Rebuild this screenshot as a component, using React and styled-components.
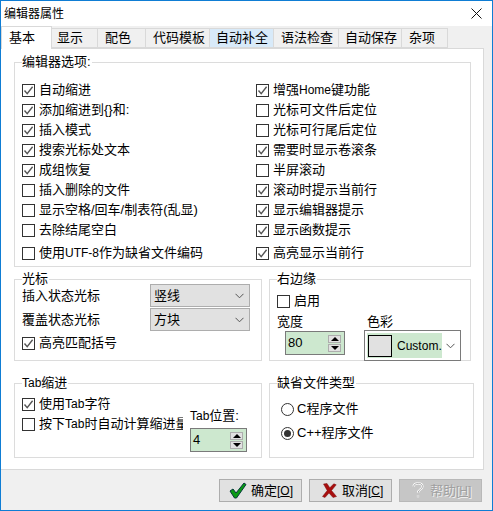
import React from "react";
import styled, { createGlobalStyle } from "styled-components";

const GlobalStyle = createGlobalStyle`
  html, body {
    margin: 0;
    padding: 0;
    background: #fff;
  }
  * {
    box-sizing: border-box;
  }
`;

const Window = styled.div`
  width: 493px;
  height: 511px;
  display: flex;
  flex-direction: column;
  border: 1px solid #0f7dd4;
  background-color: #f0f0f0;
  color: #000;
  font-family: "Liberation Sans", "Noto Sans CJK SC", sans-serif;
  font-size: 13px;
  line-height: 18px;
  overflow: hidden;
`;

const TitleBar = styled.div`
  height: 25px;
  flex: none;
  display: flex;
  align-items: center;
  justify-content: space-between;
  padding: 0 10px 0 3px;
  background-color: #fff;
  font-size: 12px;
`;

const CloseIcon = styled.svg`
  width: 11px;
  height: 11px;
`;

const TabStrip = styled.div`
  height: 22px;
  flex: none;
  display: flex;
  align-items: flex-end;
  position: relative;
  z-index: 1;
`;

const Tab = styled.div`
  width: ${(p) => p.$w}px;
  height: ${(p) => (p.$active ? 23 : 20)}px;
  margin-bottom: ${(p) => (p.$active ? -1 : 0)}px;
  padding-left: ${(p) => p.$pad}px;
  display: flex;
  align-items: center;
  border: 1px solid #d9d9d9;
  border-left: ${(p) => (p.$active ? "1px solid #d9d9d9" : "none")};
  border-bottom: ${(p) => (p.$active ? "none" : "1px solid #d9d9d9")};
  background-color: ${(p) => (p.$active ? "#fff" : p.$hover ? "#d8eaf9" : "#f0f0f0")};
`;

const Panel = styled.div`
  height: 422px;
  flex: none;
  margin-right: 8px;
  padding: 13px 0 0 13px;
  display: grid;
  grid-template-columns: 248px 205px;
  grid-template-rows: 205px 82px 85px;
  column-gap: 7px;
  row-gap: 12px;
  align-content: start;
  background-color: #fff;
  border: 1px solid #d9d9d9;
  border-left: none;
`;

const Group = styled.div`
  position: relative;
  min-width: 0;
  grid-column: ${(p) => (p.$wide ? "1 / span 2" : "auto")};
  width: ${(p) => (p.$w ? `${p.$w}px` : "auto")};
  margin-top: ${(p) => p.$top || 0}px;
  padding: ${(p) => p.$pad || "4px 7px 0"};
  border: 1px solid #dcdcdc;
`;

const Legend = styled.div`
  position: absolute;
  top: -10px;
  left: 7px;
  padding-right: 1px;
  background-color: #fff;
`;

const OptionsGrid = styled.div`
  display: grid;
  grid-template-columns: 234px 190px;
  grid-auto-rows: 20px;
`;

const Row = styled.label`
  height: 20px;
  display: flex;
  align-items: center;
  gap: 4px;
  white-space: nowrap;
  overflow: hidden;
  width: ${(p) => (p.$w ? `${p.$w}px` : "auto")};
  margin-top: ${(p) => p.$top || 0}px;
`;

const Box = styled.span`
  width: 13px;
  height: 13px;
  flex: none;
  display: flex;
  border: 1px solid #333;
  background-color: #fff;
`;

const Latin = styled.span`
  font-size: 12px;
`;

const CursorRow = styled.div`
  display: grid;
  grid-template-columns: 128px 100px;
  align-items: center;
  height: 23px;
  margin-bottom: 1px;
`;

const Select = styled.div`
  height: 23px;
  display: flex;
  align-items: center;
  justify-content: space-between;
  padding: 0 5px 0 3px;
  background-color: #e1e1e1;
  border: 1px solid #adadad;
`;

const Chevron = styled.svg`
  width: 9px;
  height: 6px;
  flex: none;
`;

const Fields = styled.div`
  display: flex;
  margin-top: 2px;
`;

const Field = styled.div`
  width: ${(p) => p.$w}px;
`;

const Caption = styled.div`
  height: 18px;
  margin-bottom: ${(p) => p.$gap || 0}px;
`;

const Spin = styled.div`
  width: ${(p) => p.$w}px;
  height: 24px;
  margin-left: ${(p) => p.$left || 0}px;
  padding: 2px 3px 2px 2px;
  display: flex;
  align-items: center;
  justify-content: space-between;
  background-color: #cde8cf;
  border: 1px solid #7a7a7a;
`;

const SpinButtons = styled.div`
  display: flex;
  flex-direction: column;
  gap: 1px;
`;

const SpinButton = styled.div`
  width: 13px;
  height: 8px;
  display: flex;
  align-items: center;
  justify-content: center;
  background-color: #e1e1e1;
  border: 1px solid #adadad;
`;

const Arrow = styled.span`
  width: 0;
  height: 0;
  border-left: 4px solid transparent;
  border-right: 4px solid transparent;
  border-${(p) => (p.$down ? "top" : "bottom")}: 4px solid #000;
`;

const ColorCombo = styled.div`
  width: 97px;
  height: 31px;
  margin-left: -3px;
  margin-top: -1px;
  padding: 2px;
  display: flex;
  align-items: center;
  position: relative;
  background-color: #fff;
  border: 1px solid #7a7a7a;
`;

const ColorValue = styled.div`
  width: 75px;
  height: 100%;
  display: flex;
  align-items: center;
  gap: 5px;
  padding-left: 1px;
  overflow: hidden;
  white-space: nowrap;
  background-color: #cde8cf;
`;

const Swatch = styled.span`
  width: 24px;
  height: 22px;
  flex: none;
  background-color: #e1e1e1;
  border: 1px solid #000;
`;

const ComboArrow = styled.span`
  flex: 1;
  display: flex;
  justify-content: center;
`;

const TabColumns = styled.div`
  display: flex;
  gap: 7px;
`;

const TabSpinColumn = styled.div`
  padding-top: 13px;
`;

const RadioRow = styled.label`
  height: 24px;
  display: flex;
  align-items: center;
  gap: 3px;
`;

const Radio = styled.span`
  width: 13px;
  height: 13px;
  flex: none;
  display: flex;
  align-items: center;
  justify-content: center;
  border: 1px solid #333;
  border-radius: 50%;
  background-color: #fff;

  &::after {
    content: "";
    width: 7px;
    height: 7px;
    border-radius: 50%;
    background-color: ${(p) => (p.$on ? "#333" : "transparent")};
  }
`;

const Footer = styled.div`
  flex: 1;
  display: flex;
  justify-content: flex-end;
  gap: 7px;
  padding: 9px 10px 0 0;
`;

const Button = styled.div`
  width: 83px;
  height: 23px;
  display: flex;
  align-items: center;
  padding-left: ${(p) => p.$pad}px;
  gap: ${(p) => p.$gap}px;
  white-space: nowrap;
  background-color: ${(p) => (p.$disabled ? "#c6c6c6" : "#e1e1e1")};
  border: 1px solid ${(p) => (p.$disabled ? "#b8b8b8" : "#adadad")};
  color: ${(p) => (p.$disabled ? "#a0a0a0" : "#000")};
  text-shadow: ${(p) => (p.$disabled ? "1px 1px 0 #eee" : "none")};
`;

const Hotkey = styled.span`
  font-size: 12px;

  u {
    text-decoration: underline;
  }
`;

const Check = () => (
  <svg width="11" height="11" viewBox="0 0 11 11">
    <path d="M1.5 5.5 L4.2 8.6 L9.6 1.8" fill="none" stroke="#555" strokeWidth="1.4" />
  </svg>
);

const CheckRow = ({ on, children, w, top }) => (
  <Row $w={w} $top={top}>
    <Box>{on && <Check />}</Box>
    <span>{children}</span>
  </Row>
);

const ChevronDown = () => (
  <Chevron viewBox="0 0 9 6">
    <path d="M0.5 0.8 L4.5 4.8 L8.5 0.8" fill="none" stroke="#555" strokeWidth="1" />
  </Chevron>
);

const SpinBox = ({ w, left, value }) => (
  <Spin $w={w} $left={left}>
    <span>{value}</span>
    <SpinButtons>
      <SpinButton>
        <Arrow />
      </SpinButton>
      <SpinButton>
        <Arrow $down />
      </SpinButton>
    </SpinButtons>
  </Spin>
);

const tabs = [
  { label: "基本", w: 51, pad: 7, active: true },
  { label: "显示", w: 46, pad: 5 },
  { label: "配色", w: 48, pad: 7 },
  { label: "代码模板", w: 64, pad: 7 },
  { label: "自动补全", w: 64, pad: 6, hover: true },
  { label: "语法检查", w: 65, pad: 7 },
  { label: "自动保存", w: 63, pad: 6 },
  { label: "杂项", w: 46, pad: 7 },
];

const options = [
  ["自动缩进", true],
  [<>增强<Latin>Home</Latin>键功能</>, true],
  ["添加缩进到{}和:", true],
  ["光标可文件后定位", false],
  ["插入模式", true],
  ["光标可行尾后定位", false],
  ["搜索光标处文本", true],
  ["需要时显示卷滚条", true],
  ["成组恢复", true],
  ["半屏滚动", false],
  ["插入删除的文件", false],
  ["滚动时提示当前行", true],
  ["显示空格/回车/制表符(乱显)", false],
  ["显示编辑器提示", true],
  ["去除结尾空白", false],
  ["显示函数提示", true],
  [<>使用<Latin>UTF-8</Latin>作为缺省文件编码</>, false, 3],
  ["高亮显示当前行", true, 3],
];

const App = () => {
  return (
    <Window>
      <GlobalStyle />
      <TitleBar>
        编辑器属性
        <CloseIcon viewBox="0 0 11 11">
          <path d="M0.5 0.5 L10.5 10.5 M10.5 0.5 L0.5 10.5" stroke="#111" strokeWidth="1" />
        </CloseIcon>
      </TitleBar>
      <TabStrip>
        {tabs.map((t) => (
          <Tab key={t.label} $w={t.w} $pad={t.pad} $active={t.active} $hover={t.hover}>
            {t.label}
          </Tab>
        ))}
      </TabStrip>
      <Panel>
        <Group $wide $w={457} $pad="17px 7px 0">
          <Legend>编辑器选项:</Legend>
          <OptionsGrid>
            {options.map(([label, on, top], i) => (
              <CheckRow key={i} on={on} top={top}>
                {label}
              </CheckRow>
            ))}
          </OptionsGrid>
        </Group>

        <Group>
          <Legend>光标</Legend>
          <CursorRow>
            插入状态光标
            <Select>
              竖线
              <ChevronDown />
            </Select>
          </CursorRow>
          <CursorRow>
            覆盖状态光标
            <Select>
              方块
              <ChevronDown />
            </Select>
          </CursorRow>
          <CheckRow on top={2}>
            高亮匹配括号
          </CheckRow>
        </Group>

        <Group $w={202} $pad="11px 7px 0">
          <Legend>右边缘</Legend>
          <CheckRow>启用</CheckRow>
          <Fields>
            <Field $w={91}>
              <Caption>宽度</Caption>
              <SpinBox w={60} left={8} value="80" />
            </Field>
            <Field $w={97}>
              <Caption>色彩</Caption>
              <ColorCombo>
                <ColorValue>
                  <Swatch />
                  <Latin>Custom.</Latin>
                </ColorValue>
                <ComboArrow>
                  <ChevronDown />
                </ComboArrow>
              </ColorCombo>
            </Field>
          </Fields>
        </Group>

        <Group $top={10} $pad="10px 7px 0">
          <Legend>
            <Latin>Tab</Latin>缩进
          </Legend>
          <TabColumns>
            <div>
              <CheckRow on w={161}>
                使用<Latin>Tab</Latin>字符
              </CheckRow>
              <CheckRow w={161}>
                按下<Latin>Tab</Latin>时自动计算缩进量
              </CheckRow>
            </div>
            <TabSpinColumn>
              <Caption $gap={3}>
                <Latin>Tab</Latin>位置:
              </Caption>
              <SpinBox w={57} value="4" />
            </TabSpinColumn>
          </TabColumns>
        </Group>

        <Group $top={10} $pad="13px 11px 0">
          <Legend>缺省文件类型</Legend>
          <RadioRow>
            <Radio />C程序文件
          </RadioRow>
          <RadioRow>
            <Radio $on />C++程序文件
          </RadioRow>
        </Group>
      </Panel>
      <Footer>
        <Button $pad={9} $gap={4}>
          <svg width="18" height="17" viewBox="0 0 18 17">
            <path d="M1 9 L4 7 L7 11 L15 1 L17 2.5 L7.5 16 L5.5 16 Z" fill="#0a9a14" stroke="#053a3a" strokeWidth="1" strokeLinejoin="round" />
          </svg>
          <span>
            确定<Hotkey>[<u>O</u>]</Hotkey>
          </span>
        </Button>
        <Button $pad={12} $gap={5}>
          <svg width="15" height="15" viewBox="0 0 15 15">
            <path d="M1.5 1 L5 0.5 L7.8 4.8 L11.8 0.8 L14.2 1.8 L9.5 7.5 L14.5 13.5 L11 14.5 L7 10 L3 14.5 L0.5 13.5 L5.2 7.5 Z" fill="#a80e0e" stroke="#7a1010" strokeWidth="0.5" />
          </svg>
          <span>
            取消<Hotkey>[<u>C</u>]</Hotkey>
          </span>
        </Button>
        <Button $disabled $pad={12} $gap={6}>
          <svg width="12" height="17" viewBox="0 0 12 17">
            <path d="M1.5 4.5 C2 0.5 10.5 0 10.5 4.5 C10.5 7.5 6 7.5 6 11 M6 13 L6 15.5" fill="none" stroke="#fff" strokeWidth="2.2" />
            <path d="M1.5 4.5 C2 0.5 10.5 0 10.5 4.5 C10.5 7.5 6 7.5 6 11 M6 13 L6 15.5" fill="none" stroke="#a4a4a4" strokeWidth="0.9" />
          </svg>
          <span>
            帮助<Hotkey>[<u>H</u>]</Hotkey>
          </span>
        </Button>
      </Footer>
    </Window>
  );
};

export default App;
